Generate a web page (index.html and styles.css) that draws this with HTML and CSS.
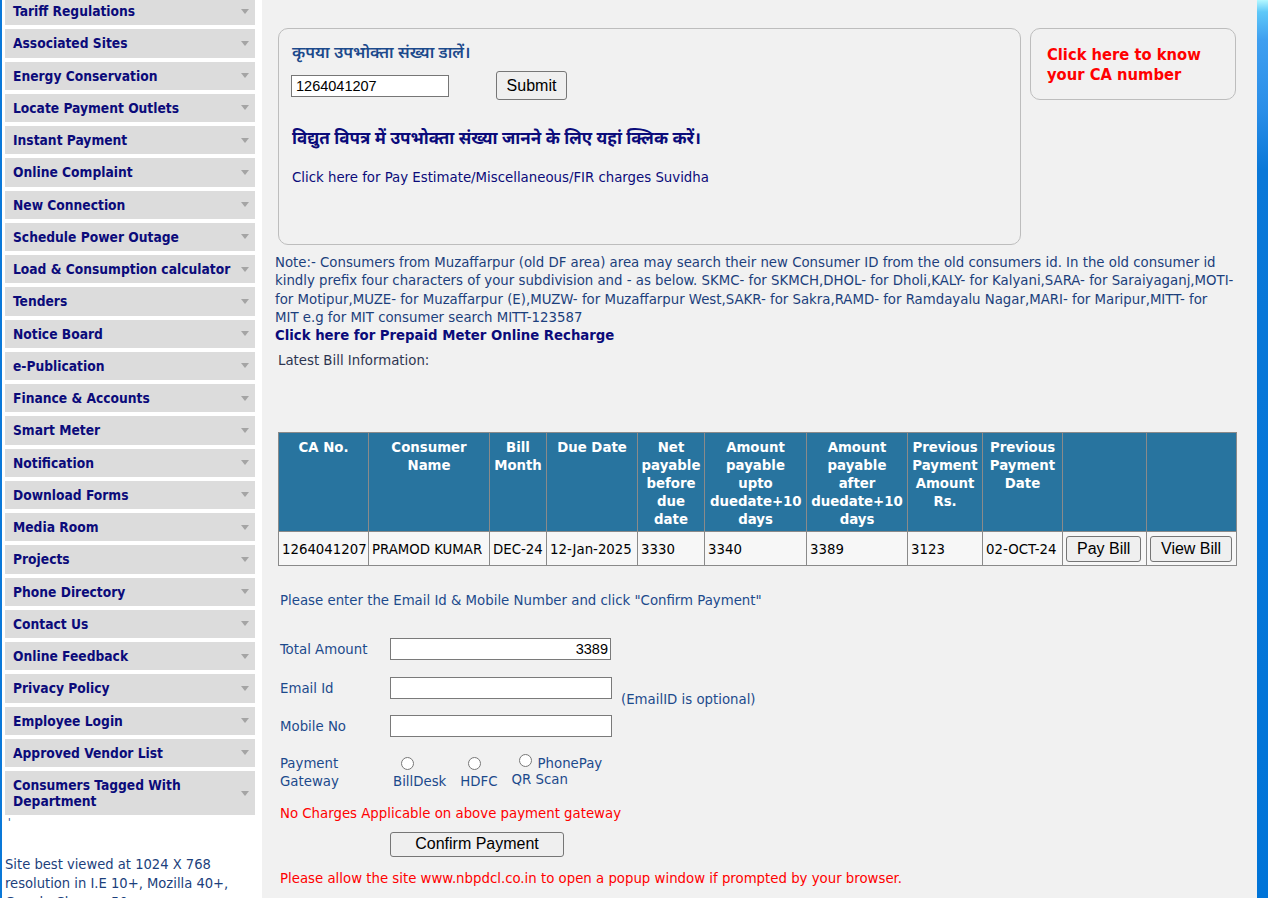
FILE: index.html
```html
<!DOCTYPE html>
<html lang="en">
<head>
<meta charset="utf-8">
<title>Bill Payment</title>
<link rel="stylesheet" href="styles.css">
</head>
<body>
<div class="page">
  <aside class="sidebar">
    <ul class="menu">
      <li class="menu-item"><span>Tariff Regulations</span><i class="caret"></i></li>
      <li class="menu-item"><span>Associated Sites</span><i class="caret"></i></li>
      <li class="menu-item"><span>Energy Conservation</span><i class="caret"></i></li>
      <li class="menu-item"><span>Locate Payment Outlets</span><i class="caret"></i></li>
      <li class="menu-item"><span>Instant Payment</span><i class="caret"></i></li>
      <li class="menu-item"><span>Online Complaint</span><i class="caret"></i></li>
      <li class="menu-item"><span>New Connection</span><i class="caret"></i></li>
      <li class="menu-item"><span>Schedule Power Outage</span><i class="caret"></i></li>
      <li class="menu-item"><span>Load &amp; Consumption calculator</span><i class="caret"></i></li>
      <li class="menu-item"><span>Tenders</span><i class="caret"></i></li>
      <li class="menu-item"><span>Notice Board</span><i class="caret"></i></li>
      <li class="menu-item"><span>e-Publication</span><i class="caret"></i></li>
      <li class="menu-item"><span>Finance &amp; Accounts</span><i class="caret"></i></li>
      <li class="menu-item"><span>Smart Meter</span><i class="caret"></i></li>
      <li class="menu-item"><span>Notification</span><i class="caret"></i></li>
      <li class="menu-item"><span>Download Forms</span><i class="caret"></i></li>
      <li class="menu-item"><span>Media Room</span><i class="caret"></i></li>
      <li class="menu-item"><span>Projects</span><i class="caret"></i></li>
      <li class="menu-item"><span>Phone Directory</span><i class="caret"></i></li>
      <li class="menu-item"><span>Contact Us</span><i class="caret"></i></li>
      <li class="menu-item"><span>Online Feedback</span><i class="caret"></i></li>
      <li class="menu-item"><span>Privacy Policy</span><i class="caret"></i></li>
      <li class="menu-item"><span>Employee Login</span><i class="caret"></i></li>
      <li class="menu-item"><span>Approved Vendor List</span><i class="caret"></i></li>
      <li class="menu-item tall"><span>Consumers Tagged With Department</span><i class="caret"></i></li>
    </ul>
    <div class="tick">'</div>
    <p class="best-viewed">Site best viewed at 1024 X 768 resolution in I.E 10+, Mozilla 40+, Google Chrome 50+</p>
  </aside>

  <main class="content">
    <div class="top-row">
      <div class="search-card">
        <div class="hi-label">कृपया उपभोक्ता संख्या डालें।</div>
        <div class="search-row">
          <input class="ca-input" type="text" value="1264041207">
          <button class="btn submit-btn" type="button">Submit</button>
        </div>
        <div class="hi-link">विद्युत विपत्र में उपभोक्ता संख्या जानने के लिए यहां क्लिक करें।</div>
        <div class="suvidha-link">Click here for Pay Estimate/Miscellaneous/FIR charges Suvidha</div>
      </div>
      <div class="ca-card">Click here to know your CA number</div>
    </div>

    <p class="note">Note:- Consumers from Muzaffarpur (old DF area) area may search their new Consumer ID from the old consumers id. In the old consumer id kindly prefix four characters of your subdivision and - as below. SKMC- for SKMCH,DHOL- for Dholi,KALY- for Kalyani,SARA- for Saraiyaganj,MOTI- for Motipur,MUZE- for Muzaffarpur (E),MUZW- for Muzaffarpur West,SAKR- for Sakra,RAMD- for Ramdayalu Nagar,MARI- for Maripur,MITT- for MIT&nbsp;e.g for MIT consumer search MITT-123587</p>
    <div class="prepaid">Click here for Prepaid Meter Online Recharge</div>
    <div class="latest">Latest Bill Information:</div>

    <table class="bill-table">
      <colgroup>
        <col class="c1"><col class="c2"><col class="c3"><col class="c4"><col class="c5"><col class="c6"><col class="c7"><col class="c8"><col class="c9"><col class="c10"><col class="c11">
      </colgroup>
      <thead>
        <tr>
          <th>CA No.</th>
          <th>Consumer Name</th>
          <th>Bill Month</th>
          <th>Due Date</th>
          <th>Net payable before due date</th>
          <th class="th-narrow">Amount payable upto duedate+10 days</th>
          <th>Amount payable after duedate+10 days</th>
          <th>Previous Payment Amount Rs.</th>
          <th>Previous Payment Date</th>
          <th></th>
          <th></th>
        </tr>
      </thead>
      <tbody>
        <tr>
          <td>1264041207</td>
          <td>PRAMOD KUMAR</td>
          <td>DEC-24</td>
          <td>12-Jan-2025</td>
          <td>3330</td>
          <td>3340</td>
          <td>3389</td>
          <td>3123</td>
          <td>02-OCT-24</td>
          <td class="btn-cell"><button class="btn row-btn" type="button">Pay Bill</button></td>
          <td class="btn-cell"><button class="btn row-btn" type="button">View Bill</button></td>
        </tr>
      </tbody>
    </table>

    <p class="instructions">Please enter the Email Id &amp; Mobile Number and click "Confirm Payment"</p>

    <div class="pay-form">
      <div class="form-row">
        <label class="form-label">Total Amount</label>
        <input class="form-input amount" type="text" value="3389">
      </div>
      <div class="form-row">
        <label class="form-label">Email Id</label>
        <input class="form-input" type="text">
        <span class="optional">(EmailID is optional)</span>
      </div>
      <div class="form-row">
        <label class="form-label">Mobile No</label>
        <input class="form-input" type="text">
      </div>
      <div class="form-row gateway-row">
        <label class="form-label gw-label">Payment Gateway</label>
        <div class="gateways">
          <div class="gw gw-billdesk"><input type="radio" name="gw" class="radio"><span>BillDesk</span></div>
          <div class="gw gw-hdfc"><input type="radio" name="gw" class="radio"><span>HDFC</span></div>
          <div class="gw gw-qr"><div class="gw-top"><input type="radio" name="gw" class="radio"><span>PhonePay</span></div><span>QR Scan</span></div>
        </div>
      </div>
    </div>

    <p class="warn no-charges">No Charges Applicable on above payment gateway</p>
    <div class="confirm-wrap"><button class="btn confirm-btn" type="button">Confirm Payment</button></div>
    <p class="warn popup">Please allow the site www.nbpdcl.co.in to open a popup window if prompted by your browser.</p>
  </main>

  <div class="edge-right"></div>
</div>
</body>
</html>
```

FILE: styles.css
```css
* { box-sizing: border-box; }

html, body {
  margin: 0;
  padding: 0;
  height: 100%;
  overflow: hidden;
}

body {
  font-family: "DejaVu Sans Condensed", "DejaVu Sans", sans-serif;
  font-stretch: condensed;
  font-size: 14.8px;
  background: #f1f1f1;
}

.page {
  display: flex;
  min-height: 898px;
  border-left: 2px solid #0a78d8;
}

/* Sidebar */
.sidebar {
  width: 260px;
  flex: 0 0 260px;
  background: #ffffff;
  padding: 0 7px 0 3px;
}

.menu {
  list-style: none;
  margin: -3px 0 0 0;
  padding: 0;
}

.menu-item {
  display: flex;
  align-items: center;
  justify-content: space-between;
  height: 28.25px;
  margin-bottom: 4px;
  padding: 0 6px 0 8px;
  background: #dcdcdc;
  color: #0b0b7a;
  font-weight: bold;
  font-size: 13.7px;
  line-height: 16px;
}

.menu-item.tall {
  height: 44px;
}

.menu-item.tall span {
  width: 200px;
}

.caret {
  width: 0;
  height: 0;
  border-left: 4.5px solid transparent;
  border-right: 4.5px solid transparent;
  border-top: 5px solid #a4a4a4;
}

.tick {
  font-size: 11px;
  line-height: 8px;
  height: 8px;
  color: #1c3f7c;
  padding-left: 3px;
  margin-top: 1px;
}

.best-viewed {
  margin: 27px 0 0 0;
  color: #1c3f7c;
  font-size: 14.6px;
  line-height: 19px;
}

/* Main content */
.content {
  flex: 1;
  padding: 28px 20px 0 16px;
  color: #1c3f7c;
}

.top-row {
  display: flex;
  gap: 9px;
  align-items: flex-start;
}

.search-card {
  width: 743px;
  height: 217px;
  border: 1px solid #bdbdbd;
  border-radius: 10px;
  padding: 11px 13px 0 13px;
}

.hi-label {
  font-family: "Noto Sans", "DejaVu Sans", sans-serif;
  font-size: 16.4px;
  font-weight: 600;
  line-height: 24px;
  color: #1c4a8c;
}

.search-row {
  display: flex;
  align-items: center;
  gap: 47px;
  margin-top: 7px;
}

.ca-input {
  width: 158px;
  height: 22px;
  margin-left: -1px;
  border: 1px solid #767676;
  padding: 0 4px;
  font-family: "Liberation Sans", Arial, sans-serif;
  font-size: 14.5px;
  color: #000;
  background: #fff;
}

.btn {
  font-family: "Liberation Sans", Arial, sans-serif;
  font-size: 16px;
  color: #000;
  background: #efefef;
  border: 1px solid #767676;
  border-radius: 3px;
  padding: 0 9px;
}

.submit-btn {
  height: 29px;
  width: 71px;
}

.hi-link {
  font-family: "Noto Sans", "DejaVu Sans", sans-serif;
  font-size: 17px;
  font-weight: bold;
  line-height: 24px;
  color: #0b0b7a;
  margin-top: 26px;
}

.suvidha-link {
  margin-top: 18px;
  font-size: 14.8px;
  line-height: 18px;
  color: #0b0b7a;
}

.ca-card {
  width: 206px;
  height: 72px;
  border: 1px solid #bdbdbd;
  border-radius: 10px;
  padding: 16px 10px 0 16px;
  color: #ff0000;
  font-weight: bold;
  font-size: 16.4px;
  line-height: 20px;
}

.note {
  margin: 8px 0 0 -3px;
  font-size: 14.8px;
  line-height: 18.33px;
  color: #1c3f7c;
}

.prepaid {
  margin-left: -3px;
  font-weight: bold;
  font-size: 14.75px;
  line-height: 18px;
  color: #0b0b7a;
}

.latest {
  margin-top: 7px;
  font-size: 14.8px;
  line-height: 18px;
  color: #2d3550;
}

/* Table */
.bill-table {
  margin-top: 63px;
  width: 958px;
  table-layout: fixed;
  border-collapse: collapse;
  border: 1px solid #8a8a8a;
}

.c1 { width: 90px; }
.c2 { width: 121px; }
.c3 { width: 57px; }
.c4 { width: 91px; }
.c5 { width: 67px; }
.c6 { width: 102px; }
.c7 { width: 101px; }
.c8 { width: 75px; }
.c9 { width: 80px; }
.c10 { width: 84px; }
.c11 { width: 90px; }

.bill-table th {
  background: #28749f;
  color: #ffffff;
  font-weight: bold;
  font-size: 14.8px;
  line-height: 18px;
  vertical-align: top;
  text-align: center;
  padding: 5px 1px 3px 1px;
  height: 98px;
  border: 1px solid #8a8a8a;
}

.bill-table th.th-narrow {
  padding-left: 5px;
  padding-right: 5px;
}

.bill-table td {
  background: #f7f7f7;
  color: #000;
  font-size: 14.8px;
  line-height: 18px;
  height: 34px;
  padding: 2px 3px;
  border: 1px solid #8a8a8a;
  white-space: nowrap;
  overflow: hidden;
}

.bill-table td.btn-cell {
  padding-left: 3px;
}

.row-btn {
  height: 26px;
  padding: 0 10px;
}

.instructions {
  margin: 25px 0 0 2px;
  font-size: 14.8px;
  line-height: 18px;
  color: #1c4a8c;
}

/* Payment form */
.pay-form {
  margin: 29px 0 0 2px;
  display: flex;
  flex-direction: column;
  gap: 16.5px;
}

.form-row {
  display: flex;
  align-items: center;
  height: 22px;
}

.form-label {
  width: 110px;
  flex: 0 0 110px;
  font-size: 14.8px;
  line-height: 18px;
  color: #1c4a8c;
}

.form-input {
  width: 222px;
  height: 22px;
  border: 1px solid #7a7a7a;
  background: #fff;
  padding: 0 2px;
  font-family: "Liberation Sans", Arial, sans-serif;
  font-size: 14.5px;
  color: #000;
}

.form-input.amount {
  width: 221px;
  text-align: right;
}

.optional {
  align-self: flex-end;
  margin: 0 0 -9px 9px;
  font-size: 14.8px;
  line-height: 18px;
  color: #1c4a8c;
}

.gateway-row {
  height: auto;
  align-items: flex-start;
}

.gw-label {
  width: 96px;
  flex: 0 0 110px;
}

.gateways {
  display: flex;
  font-size: 14.8px;
  line-height: 18px;
  color: #1c4a8c;
}

.gw {
  display: flex;
  flex-direction: column;
  align-items: flex-start;
}

.radio {
  width: 13px;
  height: 13px;
  margin: 3px 0 2px 0;
}

.gw-billdesk { margin-left: 3px; }
.gw-billdesk .radio { margin-left: 8px; }
.gw-hdfc { margin-left: 14px; }
.gw-hdfc .radio { margin-left: 8px; }
.gw-qr { margin-left: 14px; }
.gw-qr .gw-top { display: flex; align-items: flex-end; }
.gw-qr .gw-top .radio { margin: 0 6px 3px 7px; }
.gw-qr .gw-top span { line-height: 18px; margin-bottom: -2px; }

.warn {
  color: #ff0000;
  font-size: 14.8px;
  line-height: 18px;
  margin-left: 2px;
}

.no-charges {
  margin-top: 14px;
  margin-bottom: 0;
}

.confirm-wrap {
  margin: 10px 0 0 112px;
}

.confirm-btn {
  width: 174px;
  height: 25px;
}

.popup {
  margin-top: 12px;
  margin-bottom: 0;
}

.edge-right {
  width: 12px;
  flex: 0 0 12px;
  background: linear-gradient(to bottom, #b4f8ff 0px, #5ec8f8 12px, #3f9ff0 40px, #2a8ee8 110px, #0a78d8 170px, #0074d8 898px);
}
```
